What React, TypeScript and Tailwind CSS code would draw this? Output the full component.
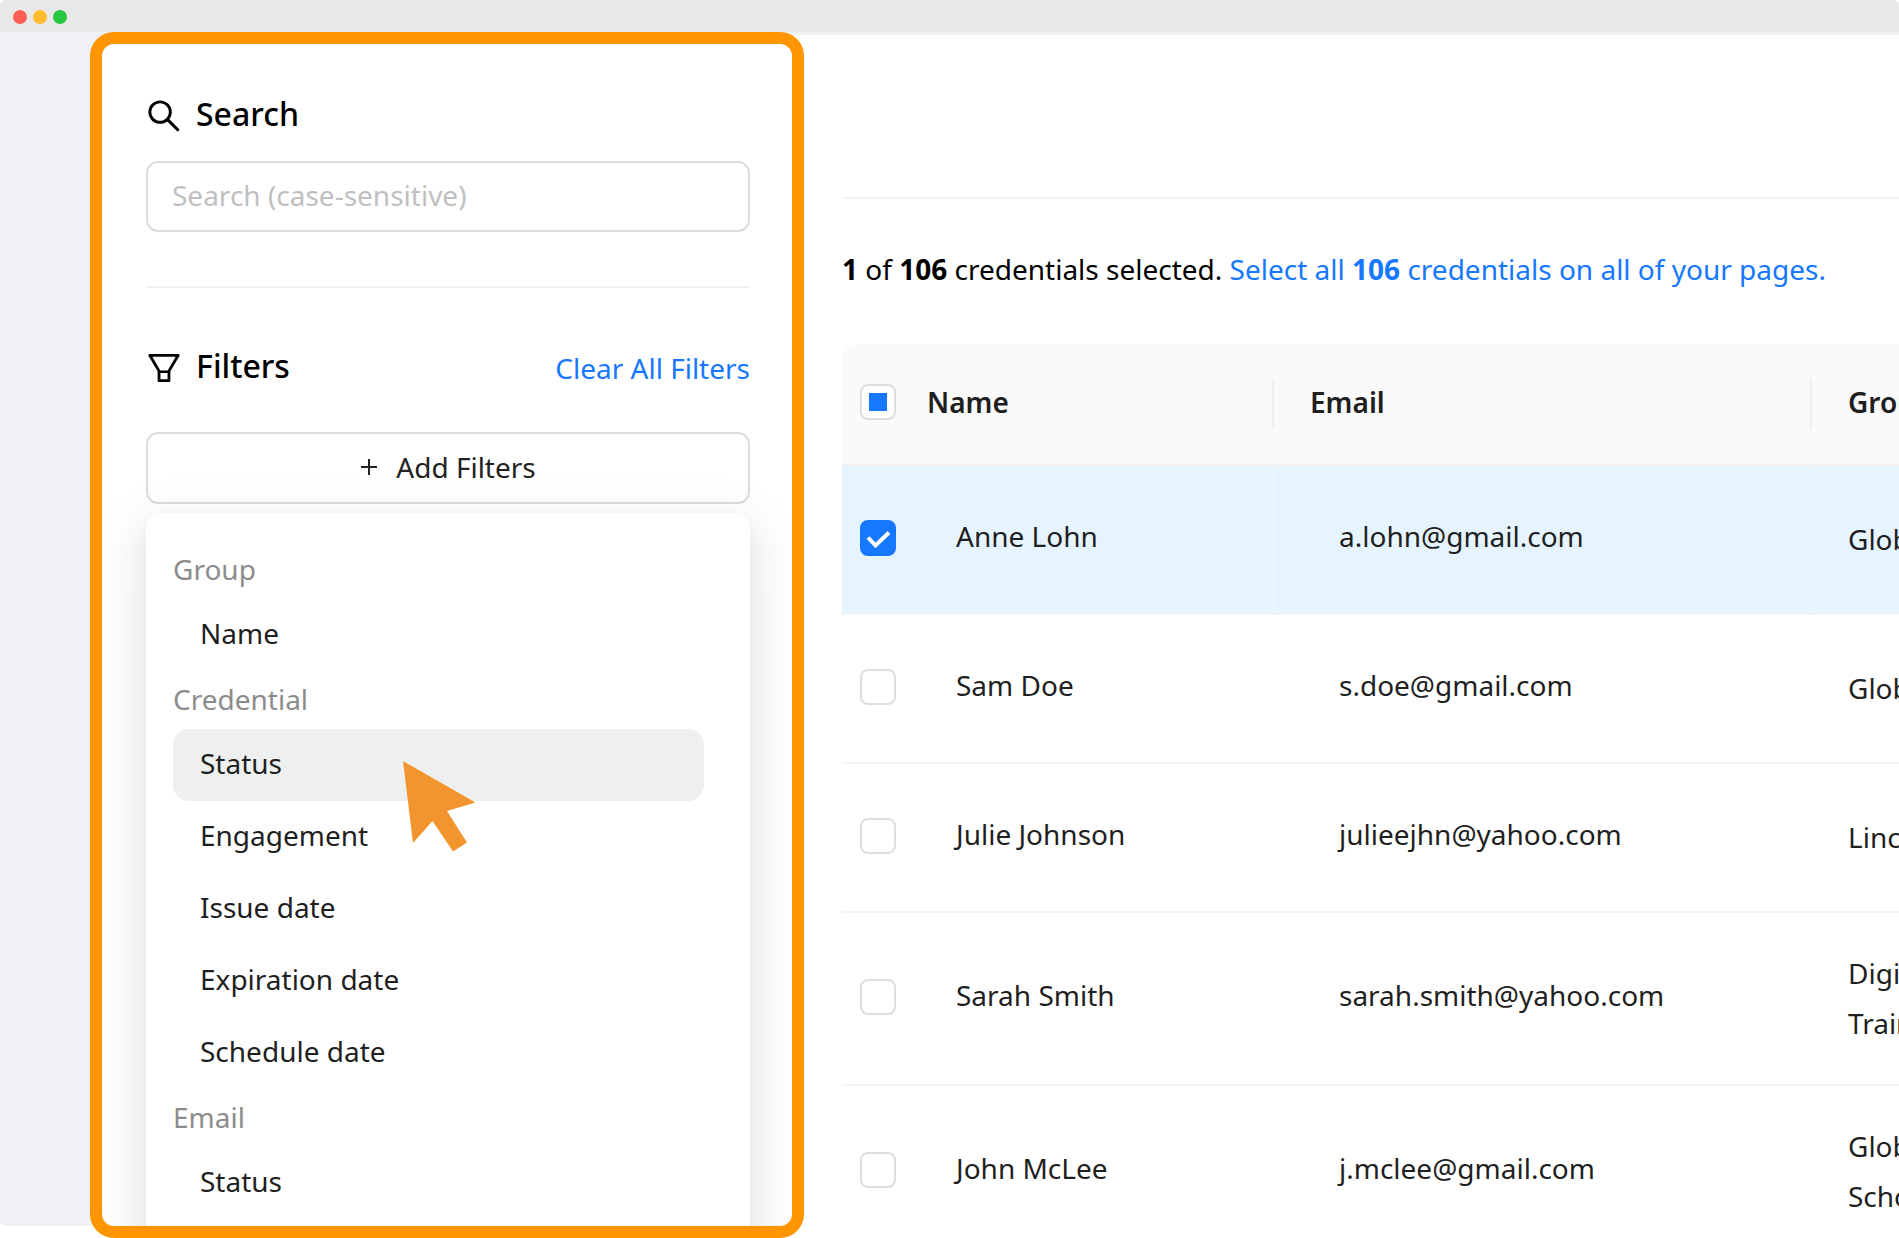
import type { ReactNode } from "react";
import { AiOutlineFilter, AiOutlineSearch } from "react-icons/ai";

type CheckState = "checked" | "unchecked" | "partial";

const menu = [
  { label: "Group", items: ["Name"] },
  {
    label: "Credential",
    items: ["Status", "Engagement", "Issue date", "Expiration date", "Schedule date"],
  },
  { label: "Email", items: ["Status"] },
];

const rows = [
  { name: "Anne Lohn", email: "a.lohn@gmail.com", group: ["Glob"], selected: true },
  { name: "Sam Doe", email: "s.doe@gmail.com", group: ["Glob"], selected: false },
  { name: "Julie Johnson", email: "julieejhn@yahoo.com", group: ["Linc"], selected: false },
  { name: "Sarah Smith", email: "sarah.smith@yahoo.com", group: ["Digi", "Train"], selected: false },
  { name: "John McLee", email: "j.mclee@gmail.com", group: ["Glob", "Scho"], selected: false },
];

function CheckBox({ state, label }: { state: CheckState; label: string }) {
  return (
    <label className="relative mx-auto block size-9">
      <input
        type="checkbox"
        aria-label={label}
        defaultChecked={state === "checked"}
        className="block size-9 appearance-none rounded-lg border-2 border-[#dedede] bg-white checked:border-[#1677ff] checked:bg-[#1677ff]"
      />
      {state === "checked" && (
        <svg viewBox="0 0 36 36" className="pointer-events-none absolute inset-0 size-9" fill="none">
          <path d="M8 17.5 L15.5 25.5 L29 12.5" stroke="white" strokeWidth="4" />
        </svg>
      )}
      {state === "partial" && (
        <span className="pointer-events-none absolute inset-0 m-auto size-[18px] bg-[#1677ff]" />
      )}
    </label>
  );
}

function HeaderCell({ children, divider }: { children: ReactNode; divider?: boolean }) {
  return (
    <div className="flex h-[50px] items-center">
      <span className="flex-1 pb-1">{children}</span>
      {divider && <span className="h-full w-0.5 bg-[#f0f0f0]" />}
    </div>
  );
}

function FilterPanel() {
  return (
    <aside className="relative z-10 w-[714px] shrink-0 overflow-hidden rounded-3xl border-12 border-[#ff9500] bg-white pt-[46px] pr-[42px] pl-11">
      <label htmlFor="search" className="flex h-[52px] items-center gap-3 text-[32px] leading-[44px] font-medium text-black">
        <AiOutlineSearch className="-ml-0.5 size-10" />
        <span className="pb-1">Search</span>
      </label>
      <input
        id="search"
        type="text"
        placeholder="Search (case-sensitive)"
        className="mt-[19px] block h-[71px] w-full rounded-xl border-2 border-[#dcdcdc] bg-white px-6 pb-1 text-[28px] text-[#222] placeholder:text-[#bfbfbf]"
      />
      <hr className="mt-[54px] border-t-2 border-[#f2f2f2]" />

      <div className="mt-[54px] flex h-[52px] items-center justify-between">
        <h2 className="flex items-center gap-3 text-[32px] leading-[44px] font-medium text-black">
          <AiOutlineFilter className="-ml-0.5 size-10" />
          <span className="pb-1">Filters</span>
        </h2>
        <button type="button" className="text-[28px] text-[#1677ff]">
          Clear All Filters
        </button>
      </div>

      <button
        type="button"
        className="mt-[38px] flex h-[72px] w-full items-center justify-center gap-[18px] rounded-xl border-2 border-[#dcdcdc] bg-white pb-0.5 text-[28px] text-[#222]"
      >
        <svg viewBox="0 0 18 18" className="size-[18px]" stroke="currentColor" strokeWidth="2">
          <path d="M9 1V17M1 9H17" />
        </svg>
        Add Filters
      </button>

      <div className="relative mt-[9px] h-[900px] rounded-2xl bg-white pt-7 pr-[46px] pl-[27px] shadow-[0_12px_32px_rgba(0,0,0,0.08),0_6px_12px_-8px_rgba(0,0,0,0.12),0_18px_56px_16px_rgba(0,0,0,0.05)]">
        {menu.map((section) => (
          <section key={section.label}>
            <h3 className="flex h-[58px] items-center pb-0.5 text-[28px] text-[#8c8c8c]">{section.label}</h3>
            {section.items.map((item) => (
              <button
                key={item}
                type="button"
                className={
                  section.label === "Credential" && item === "Status"
                    ? "flex h-[72px] w-full items-center rounded-2xl bg-[#eef0ef] px-[27px] pb-1 text-[28px] text-[#1f1f1f]"
                    : "flex h-[72px] w-full items-center rounded-2xl px-[27px] pb-1 text-[28px] text-[#1f1f1f]"
                }
              >
                {item}
              </button>
            ))}
          </section>
        ))}
        <svg viewBox="0 0 73 91" className="pointer-events-none absolute top-[248px] left-[257px] h-[91px] w-[73px]">
          <path d="M0 0 L72.5 41.5 L44 50 L64 81.5 L50 90.5 L29.5 60 L10 82 Z" fill="#f2952f" />
        </svg>
      </div>
    </aside>
  );
}

function CredentialTable() {
  return (
    <table className="mt-[50px] w-full table-fixed border-separate border-spacing-0 text-left text-[28px] leading-[50px] text-[#1f1f1f]">
      <colgroup>
        <col className="w-[72px]" />
        <col className="w-[360px]" />
        <col className="w-[538px]" />
        <col />
      </colgroup>
      <thead>
        <tr>
          <th className="h-[122px] rounded-tl-2xl border-b-2 border-[#f0f0f0] bg-[#fafafa] pb-1">
            <CheckBox state="partial" label="Select all rows" />
          </th>
          <th className="border-b-2 border-[#f0f0f0] bg-[#fafafa] pl-[13px] font-semibold">
            <HeaderCell divider>Name</HeaderCell>
          </th>
          <th className="border-b-2 border-[#f0f0f0] bg-[#fafafa] pl-9 font-semibold">
            <HeaderCell divider>Email</HeaderCell>
          </th>
          <th className="border-b-2 border-[#f0f0f0] bg-[#fafafa] pl-9 font-semibold">
            <HeaderCell>Group</HeaderCell>
          </th>
        </tr>
      </thead>
      <tbody>
        {rows.map((row) => (
          <tr key={row.name} className={row.selected ? "bg-[#e6f4ff]" : "bg-white"}>
            <td className="border-b-2 border-[#f3f3f3] pb-1">
              <CheckBox state={row.selected ? "checked" : "unchecked"} label={`Select ${row.name}`} />
            </td>
            <td className={row.selected ? "border-r-2 border-b-2 border-r-[#ecf6ff] border-b-[#f3f3f3] pb-2 pl-[42px]" : "border-b-2 border-[#f3f3f3] pb-2 pl-[42px]"}>
              {row.name}
            </td>
            <td className={row.selected ? "border-r-2 border-b-2 border-r-[#ecf6ff] border-b-[#f3f3f3] pb-2 pl-[65px]" : "border-b-2 border-[#f3f3f3] pb-2 pl-[65px]"}>
              {row.email}
            </td>
            <td
              className={
                row.group.length > 1
                  ? "h-[173px] border-b-2 border-[#f3f3f3] pb-0.5 pl-9 whitespace-nowrap"
                  : "h-[149px] border-b-2 border-[#f3f3f3] pb-0.5 pl-9 whitespace-nowrap"
              }
            >
              {row.group.map((line) => (
                <div key={line}>{line}</div>
              ))}
            </td>
          </tr>
        ))}
      </tbody>
    </table>
  );
}

export default function App() {
  return (
    <div className="flex h-screen flex-col overflow-hidden bg-white font-['Noto_Sans',sans-serif]">
      <header className="flex h-8 shrink-0 items-center gap-1.5 rounded-t-md bg-[#e8e8e8] px-[13px] pt-0.5">
        <span className="size-3.5 rounded-full bg-[#ff5f57]" />
        <span className="size-3.5 rounded-full bg-[#febc2e]" />
        <span className="size-3.5 rounded-full bg-[#28c840]" />
      </header>
      <div className="flex min-h-0 flex-1">
        <div className="-mr-6 mb-3 w-[114px] shrink-0 rounded-bl-md bg-[#f0f1f5]" />
        <FilterPanel />
        <main className="mb-3 -ml-6 min-w-0 flex-1 overflow-hidden rounded-br-md border-t-3 border-[#f0f1f5] bg-white pl-[62px]">
          <hr className="mt-[162px] border-t-2 border-[#f3f3f3]" />
          <p className="mt-[45px] text-[28px] leading-[50px] whitespace-nowrap text-black">
            <strong>1</strong> of <strong>106</strong> credentials selected.{" "}
            <a href="#all" className="text-[#1677ff]">
              Select all <strong>106</strong> credentials on all of your pages.
            </a>
          </p>
          <CredentialTable />
        </main>
      </div>
    </div>
  );
}
